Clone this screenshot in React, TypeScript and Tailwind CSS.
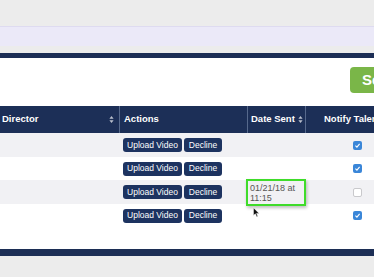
import React from 'react'

const rows = [
  { bg: 'bg-[#f1f1f4]', checked: true, h: 'h-[24px]' },
  { bg: 'bg-white', checked: true, h: 'h-[23px]' },
  { bg: 'bg-[#f1f1f4]', checked: false, h: 'h-[24px]', date: true },
  { bg: 'bg-white', checked: true, h: 'h-[23px]' },
]

function SortIcon() {
  return (
    <svg viewBox="0 0 6 10" className="h-[7px] w-[5px] shrink-0 fill-white/70">
      <path d="M3 0 6 4H0Z M3 10 0 6h6Z" />
    </svg>
  )
}

function Checkbox({ checked }: { checked: boolean }) {
  if (!checked) {
    return <div className="h-[9px] w-[9px] rounded-[2px] border border-[#c9c9cc] bg-white" />
  }
  return (
    <div className="flex h-[9px] w-[9px] items-center justify-center rounded-[2px] bg-[#3a86d8]">
      <svg viewBox="0 0 10 10" className="h-[7px] w-[7px]">
        <path d="M2 5.2 4.2 7.3 8 2.8" fill="none" stroke="white" strokeWidth="1.6" />
      </svg>
    </div>
  )
}

export default function App() {
  return (
    <div className="h-[277px] w-[374px] overflow-hidden bg-[#ececec] font-['Liberation_Sans',Arial,sans-serif]">
      <div className="h-[26px]" />
      <div className="h-[20px] border-t border-[#dedbf0] bg-[#ebe9f8]" />
      <div className="h-[7px]" />
      <div className="h-[5px] bg-[#1c2e55]" />

      <div className="bg-white">
        <div className="flex h-[48px] items-center justify-end">
          <div className="mt-[-4px] flex h-[26px] w-[24px] items-center overflow-hidden whitespace-nowrap rounded-l-[4px] bg-[#7ab648] pl-[12px] text-[15px] font-bold text-white">
            Send
          </div>
        </div>

        <div className="grid h-[27px] grid-cols-[120px_128px_58px_1fr] bg-[#1c2f57] text-[9.5px] font-bold whitespace-nowrap text-white">
          <div className="flex items-center justify-between border-r border-[#56698c] pl-[2px] pr-[5px]">
            <span>Director</span>
            <SortIcon />
          </div>
          <div className="flex items-center border-r border-[#56698c] pl-[4px]">Actions</div>
          <div className="flex items-center gap-[3px] overflow-hidden border-r border-[#56698c] pl-[3px]">
            <span>Date Sent</span>
            <SortIcon />
          </div>
          <div className="flex items-center overflow-hidden pl-[18px]">Notify Talent</div>
        </div>

        {rows.map((r, i) => (
          <div key={i} className={`grid grid-cols-[120px_128px_58px_1fr] ${r.bg} ${r.h}`}>
            <div />
            <div className="flex items-center gap-[2px] pl-[3px]">
              <button className="h-[14px] w-[59px] rounded-[3px] bg-[#1d3360] text-[8.5px] text-white">
                Upload Video
              </button>
              <button className="h-[14px] w-[38px] rounded-[3px] bg-[#1d3360] text-[8.5px] text-white">
                Decline
              </button>
            </div>
            <div className="relative">
              {r.date ? (
                <>
                  <div className="pl-[2px] pt-[3px] text-[9px] leading-[10px] text-[#555]">
                    01/21/18 at
                    <br />
                    11:15
                  </div>
                  <div className="absolute left-[-2px] top-[-1px] h-[27px] w-[60px] border-[2px] border-[#3fdc2a] shadow-[1px_2px_3px_rgba(0,0,0,0.25)]" />
                  <svg viewBox="0 0 8 12" className="absolute left-[5px] top-[27px] h-[11px] w-[7px]">
                    <path d="M0.5 0.5V9.5L2.7 7.5 4.3 11 5.6 10.4 4.1 7H7Z" fill="#111" stroke="white" strokeWidth="0.6" />
                  </svg>
                </>
              ) : null}
            </div>
            <div className="flex items-center pl-[47px]">
              <Checkbox checked={r.checked} />
            </div>
          </div>
        ))}

        <div className="h-[22px]" />
      </div>
      <div className="h-[7px] bg-[#1c2e55]" />
    </div>
  )
}
